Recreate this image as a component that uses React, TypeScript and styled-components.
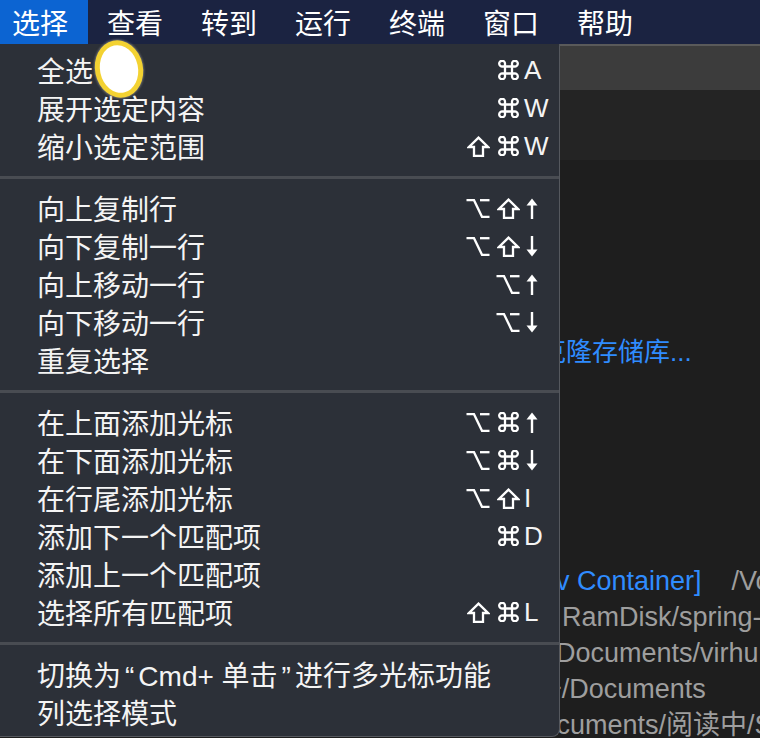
import React from 'react';
import styled, { createGlobalStyle } from 'styled-components';

const GlobalStyle = createGlobalStyle`
  html, body {
    margin: 0;
    padding: 0;
    background: #1e1e1e;
    overflow: hidden;
  }
  * { box-sizing: border-box; }
`;

const UI_FONT = `"Liberation Sans", "Noto Sans CJK SC", sans-serif`;

const Screen = styled.div`
  position: relative;
  width: 760px;
  height: 738px;
  display: flex;
  flex-direction: column;
  overflow: hidden;
  font-family: ${UI_FONT};
  color: #fff;
`;

const MenuBar = styled.div`
  height: 44px;
  flex-shrink: 0;
  display: flex;
  align-items: stretch;
  background: #1b2341;
`;

const MenuTitle = styled.div<{ $active?: boolean }>`
  display: flex;
  align-items: center;
  padding: 0 19px;
  font-size: 28px;
  background: ${(p) => (p.$active ? '#0c64d2' : 'transparent')};

  &:first-child {
    padding: 0 20px 0 12px;
  }
`;

const Window = styled.div`
  position: relative;
  flex: 1;
  display: flex;
  flex-direction: column;
`;

const TabStrip = styled.div`
  height: 46px;
  flex-shrink: 0;
  background: #3c3c3c;
  border-top: 2px solid #5a5a5a;
`;

const Editor = styled.div`
  flex: 1;
  display: flex;
  flex-direction: column;
  background: linear-gradient(#242424 0, #242424 70px, #1e1e1e 70px);
  font-size: 27px;
  white-space: nowrap;
`;

const CloneLink = styled.div`
  margin: 244px 0 0 540px;
  height: 36px;
  line-height: 36px;
  font-size: 26px;
  color: #2f8cff;
`;

const RecentList = styled.div`
  margin-top: 193px;
  display: flex;
  flex-direction: column;
`;

const RecentLine = styled.div<{ $indent: number }>`
  height: 36px;
  line-height: 36px;
  margin-left: ${(p) => p.$indent}px;
  color: #9e9e9e;
`;

const LinkText = styled.span`
  color: #2f8cff;
`;

const PathText = styled.span`
  margin-left: 30px;
`;

const Dropdown = styled.div`
  position: absolute;
  top: 0;
  left: 0;
  width: 560px;
  height: 693px;
  padding: 7px 0 5px;
  background: #2c3038;
  border-right: 1px solid #55585e;
  border-bottom: 1px solid #55585e;
  border-bottom-right-radius: 8px;
`;

const Row = styled.div`
  height: 38px;
  display: flex;
  align-items: center;
  padding-left: 37px;
  font-size: 28px;
  color: #f4f4f4;
`;

const Label = styled.span`
  flex: 1;
`;

const Quote = styled.span`
  margin: 0 4px;
`;

const Mods = styled.span`
  display: flex;
`;

const ModSlot = styled.span`
  width: 30px;
  height: 24px;
  display: flex;
  align-items: center;
  justify-content: center;

  svg {
    display: block;
  }
`;

const Key = styled.span`
  width: 36px;
  padding-left: 1px;
  display: flex;
  align-items: center;
  font-family: "Liberation Sans", sans-serif;
  font-size: 26px;

  svg {
    display: block;
    margin-left: 2px;
  }
`;

const Separator = styled.div`
  height: 24px;
  display: flex;
  align-items: center;

  &::before {
    content: '';
    flex: 1;
    height: 3px;
    background: #494c52;
  }
`;

const CursorHalo = styled.div`
  position: absolute;
  left: 95px;
  top: 40px;
  width: 48px;
  height: 58px;
  border-radius: 50%;
  background: #fff;
  border: 5px solid #f3d232;
  box-shadow: 0 0 2px 1px rgba(140, 140, 140, 0.6);
  transform: rotate(-12deg);
`;

const CmdIcon = () => (
  <svg width="23" height="20" viewBox="0 0 23 20" fill="none" stroke="#fff" strokeWidth="2.3">
    <path d="M8 6.5v7M15 6.5v7M8 6.5h7M8 13.5h7" />
    <path d="M8 6.5H5.5a2.9 2.9 0 1 1 2.5-2.9V6.5" />
    <path d="M15 6.5h2.5a2.9 2.9 0 1 0-2.5-2.9V6.5" />
    <path d="M8 13.5H5.5a2.9 2.9 0 1 0 2.5 2.9V13.5" />
    <path d="M15 13.5h2.5a2.9 2.9 0 1 1-2.5 2.9V13.5" />
  </svg>
);

const ShiftIcon = () => (
  <svg width="23" height="21" viewBox="0 0 23 21" fill="none" stroke="#fff" strokeWidth="2.3" strokeLinejoin="miter">
    <path d="M11.5 1.6L21 11H16V19.8H7V11H2Z" />
  </svg>
);

const OptionIcon = () => (
  <svg width="24" height="20" viewBox="0 0 24 20" fill="none" stroke="#fff" strokeWidth="2.3">
    <path d="M0.5 2.2H8L16 18.8H23.5" />
    <path d="M14 2.2H23.5" />
  </svg>
);

const ArrowIcon = ({ down }: { down?: boolean }) => (
  <svg
    width="12"
    height="21"
    viewBox="0 0 12 21"
    style={down ? { transform: 'rotate(180deg)' } : undefined}
  >
    <path d="M6 6V21" stroke="#fff" strokeWidth="2.4" />
    <path d="M0.5 7.5L6 0.5L11.5 7.5Z" fill="#fff" />
  </svg>
);

const modIcons: Record<string, () => React.ReactElement> = {
  cmd: CmdIcon,
  shift: ShiftIcon,
  opt: OptionIcon,
};

const renderKey = (k: string) => {
  if (k === 'up') return <ArrowIcon />;
  if (k === 'down') return <ArrowIcon down />;
  return k;
};

type Item = { label: React.ReactNode; id: string; mods?: string[]; key?: string };

const groups: Item[][] = [
  [
    { id: 'a', label: '全选', mods: ['cmd'], key: 'A' },
    { id: 'b', label: '展开选定内容', mods: ['cmd'], key: 'W' },
    { id: 'c', label: '缩小选定范围', mods: ['shift', 'cmd'], key: 'W' },
  ],
  [
    { id: 'd', label: '向上复制行', mods: ['opt', 'shift'], key: 'up' },
    { id: 'e', label: '向下复制一行', mods: ['opt', 'shift'], key: 'down' },
    { id: 'f', label: '向上移动一行', mods: ['opt'], key: 'up' },
    { id: 'g', label: '向下移动一行', mods: ['opt'], key: 'down' },
    { id: 'h', label: '重复选择' },
  ],
  [
    { id: 'i', label: '在上面添加光标', mods: ['opt', 'cmd'], key: 'up' },
    { id: 'j', label: '在下面添加光标', mods: ['opt', 'cmd'], key: 'down' },
    { id: 'k', label: '在行尾添加光标', mods: ['opt', 'shift'], key: 'I' },
    { id: 'l', label: '添加下一个匹配项', mods: ['cmd'], key: 'D' },
    { id: 'm', label: '添加上一个匹配项' },
    { id: 'n', label: '选择所有匹配项', mods: ['shift', 'cmd'], key: 'L' },
  ],
  [
    {
      id: 'o',
      label: (
        <>
          切换为<Quote>“</Quote>Cmd+ 单击<Quote>”</Quote>进行多光标功能
        </>
      ),
    },
    { id: 'p', label: '列选择模式' },
  ],
];

const menus = ['选择', '查看', '转到', '运行', '终端', '窗口', '帮助'];

export default function App() {
  return (
    <>
      <GlobalStyle />
      <Screen>
        <MenuBar>
          {menus.map((m, i) => (
            <MenuTitle key={m} $active={i === 0}>
              {m}
            </MenuTitle>
          ))}
        </MenuBar>
        <Window>
          <TabStrip />
          <Editor>
            <CloneLink>克隆存储库...</CloneLink>
            <RecentList>
              <RecentLine $indent={556}>
                <LinkText>v Container]</LinkText>
                <PathText>/Vo</PathText>
              </RecentLine>
              <RecentLine $indent={562}>RamDisk/spring-</RecentLine>
              <RecentLine $indent={556}>Documents/virhu</RecentLine>
              <RecentLine $indent={546}>~/Documents</RecentLine>
              <RecentLine $indent={522}>Documents/阅读中/S</RecentLine>
            </RecentList>
          </Editor>
          <Dropdown>
            {groups.map((g, gi) => (
              <React.Fragment key={gi}>
                {gi > 0 && <Separator />}
                {g.map((it) => (
                  <Row key={it.id}>
                    <Label>{it.label}</Label>
                    {it.key && (
                      <>
                        <Mods>
                          {it.mods?.map((m, mi) => {
                            const Icon = modIcons[m];
                            return (
                              <ModSlot key={mi}>
                                <Icon />
                              </ModSlot>
                            );
                          })}
                        </Mods>
                        <Key>{renderKey(it.key)}</Key>
                      </>
                    )}
                  </Row>
                ))}
              </React.Fragment>
            ))}
          </Dropdown>
        </Window>
        <CursorHalo />
      </Screen>
    </>
  );
}
